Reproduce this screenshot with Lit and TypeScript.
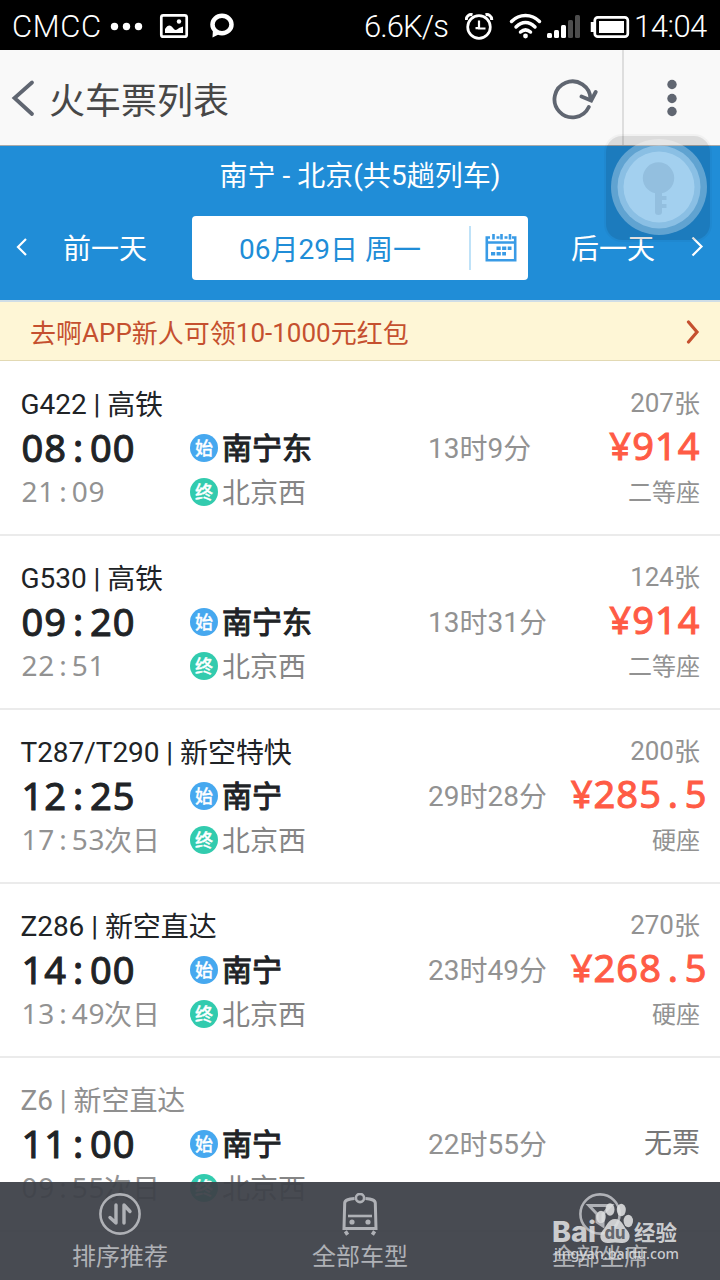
import { LitElement, html, css } from "lit";
import { customElement, property } from "lit/decorators.js";
import { classMap } from "lit/directives/class-map.js";

interface Train {
  code: string;
  kind: string;
  depart: string;
  arrive: string;
  nextDay?: boolean;
  from: string;
  to: string;
  duration: string;
  left?: string;
  price?: string;
  seat?: string;
}

const TRAINS: Train[] = [
  { code: "G422", kind: "高铁", depart: "08:00", arrive: "21:09", from: "南宁东", to: "北京西", duration: "13时9分", left: "207张", price: "¥914", seat: "二等座" },
  { code: "G530", kind: "高铁", depart: "09:20", arrive: "22:51", from: "南宁东", to: "北京西", duration: "13时31分", left: "124张", price: "¥914", seat: "二等座" },
  { code: "T287/T290", kind: "新空特快", depart: "12:25", arrive: "17:53", nextDay: true, from: "南宁", to: "北京西", duration: "29时28分", left: "200张", price: "¥285.5", seat: "硬座" },
  { code: "Z286", kind: "新空直达", depart: "14:00", arrive: "13:49", nextDay: true, from: "南宁", to: "北京西", duration: "23时49分", left: "270张", price: "¥268.5", seat: "硬座" },
  { code: "Z6", kind: "新空直达", depart: "11:00", arrive: "09:55", nextDay: true, from: "南宁", to: "北京西", duration: "22时55分" },
];

/** Splits a mixed string so that the Han runs can sit slightly lower than the Latin ones. */
const mixed = (s = "") =>
  s.split(/([\u4e00-\u9fff]+)/).map((p) => (/[\u4e00-\u9fff]/.test(p) ? html`<span class="han">${p}</span>` : p));

const han = css`
  .han { vertical-align: -1px; line-height: 1; }
`;

/** Digits and punctuation set on an even 0.6em pitch. */
@customElement("mono-text")
export class MonoText extends LitElement {
  @property() value = "";
  static styles = css`
    :host { display: inline-flex; font-family: "Noto Sans", "Noto Sans CJK SC", sans-serif; }
    .c { width: 0.6em; text-align: center; flex: none; }
  `;
  render() {
    return html`${[...this.value].map((c) => html`<span class="c">${c}</span>`)}`;
  }
}

@customElement("train-row")
export class TrainRow extends LitElement {
  @property({ attribute: false }) train!: Train;
  static styles = [han, css`
    :host { display: block; box-sizing: border-box; height: 174px; padding: 20px 20px 0 21px; border-bottom: 2px solid #ebebeb; color: #202326; background: #fff; }
    .row { display: grid; grid-template-columns: 169px 238px 1fr; grid-template-rows: repeat(3, 44px); white-space: nowrap; line-height: 44px; }
    .name { grid-column: 1 / 3; line-height: 46px; margin-left: -0.5px; letter-spacing: -0.05px; }
    .off { color: #8f8f8f; }
    .depart { font-size: 38px; font-weight: 400; line-height: 42px; -webkit-text-stroke: 1px currentColor; }
    .arrive { color: #929292; display: flex; line-height: 43px; }
    .arrive .day { line-height: 48px; margin-left: -1px; }
    .station { display: flex; align-items: center; gap: 4px; height: 44px; }
    .from { font-size: 30px; font-weight: 400; line-height: 42px; padding-top: 2px; -webkit-text-stroke: 1.1px currentColor; }
    .to { color: #858585; }
    .dest { line-height: 40px; padding-top: 4px; }
    .badge { width: 28px; height: 28px; border-radius: 50%; background: #46a8ef; color: #fff; font-size: 18px; font-weight: 500; line-height: 29px; text-align: center; -webkit-text-stroke: 0.3px currentColor; }
    .badge.end { background: #32cbae; }
    .left { grid-column: 3; text-align: right; font-size: 26px; color: #929292; line-height: 42px; }
    .meta { display: flex; justify-content: space-between; }
    .duration { color: #929292; line-height: 45px; }
    .price { font-size: 38px; font-weight: 400; color: #ff5b45; line-height: 39px; -webkit-text-stroke: 1px currentColor; }
    .price.long { margin-right: -7px; }
    .seat { grid-column: 3; text-align: right; font-size: 24px; color: #929292; line-height: 46px; }
    .none { color: #777; line-height: 44px; }
  `];
  render() {
    const t = this.train;
    return html`<div class="row">
      <div class=${classMap({ name: true, off: !t.price })}>${mixed(`${t.code} | ${t.kind}`)}</div>
      <div class="left">${mixed(t.left)}</div>
      <div class="depart"><mono-text .value=${t.depart}></mono-text></div>
      <div class="station"><span class="badge">始</span><span class="from">${t.from}</span></div>
      <div class="meta">
        <span class="duration">${mixed(t.duration)}</span>
        ${t.price
          ? html`<mono-text class=${classMap({ price: true, long: t.price.length > 4 })} .value=${t.price}></mono-text>`
          : html`<span class="none">无票</span>`}
      </div>
      <div class="arrive"><mono-text .value=${t.arrive}></mono-text>${t.nextDay ? html`<span class="day">次日</span>` : ""}</div>
      <div class="station to"><span class="badge end">终</span><span class="dest">${t.to}</span></div>
      <div class="seat">${t.seat}</div>
    </div>`;
  }
}

const chevron = (d: string, w: number, h: number, sw: number, cap = "butt") => html`<svg width=${w} height=${h} viewBox="0 0 ${w} ${h}" fill="none" stroke="currentColor" stroke-width=${sw} stroke-linecap=${cap} stroke-linejoin="miter"><path d=${d} /></svg>`;

@customElement("app-root")
export class AppRoot extends LitElement {
  static styles = [han, css`
    :host { display: block; position: relative; width: 720px; height: 1280px; overflow: hidden; background: #fff; font-family: Roboto, "Noto Sans CJK SC", sans-serif; font-size: 28px; white-space: nowrap; }
    svg { display: block; flex: none; }
    .status { height: 50px; box-sizing: border-box; background: #000; color: #fff; display: flex; align-items: center; padding: 3px 12px 0 12px; font-size: 31px; font-weight: 300; line-height: 47px; }
    .carrier { width: 98px; letter-spacing: 0.6px; }
    .speed { width: 101px; margin-left: 128px; letter-spacing: -0.9px; }
    .clock { letter-spacing: -0.5px; margin-left: 3px; }
    .bar { height: 96px; box-sizing: border-box; background: #f9f9f9; border-bottom: 1px solid #aaa; display: flex; align-items: center; color: #606671; padding-left: 11px; }
    .bar h1 { margin: 0 0 0 13px; flex: 1; font-size: 36px; font-weight: 400; line-height: 60px; padding-top: 8px; color: #474747; }
    .more { display: flex; width: 98px; height: 95px; margin-left: 24px; box-sizing: border-box; border-left: 2px solid #dedede; align-items: center; justify-content: center; }
    .nav { height: 154px; background: #208dd7; color: #fff; border-bottom: 2px solid #cfdde6; }
    .route { text-align: center; line-height: 60px; height: 70px; }
    .days { display: flex; align-items: center; height: 64px; line-height: 64px; padding: 0 15px 0 16px; }
    .prev, .next { line-height: 60px; padding-top: 4px; }
    .prev { margin-left: 35px; width: 129px; }
    .next { margin-left: 43px; flex: 1; }
    .date { width: 336px; height: 64px; box-sizing: border-box; display: flex; align-items: center; background: #fff; border-radius: 4px; color: #208dd7; padding-left: 47px; }
    .date .day { width: 230px; line-height: 60px; padding-top: 3px; }
    .cal { height: 44px; border-left: 2px solid #bfe2f8; padding-left: 14px; display: flex; align-items: center; }
    .promo { height: 58px; border-bottom: 1px solid #e2d9b3; margin-bottom: 1px; background: #fef6d6; color: #c5502f; font-size: 26px; line-height: 58px; display: flex; align-items: center; justify-content: space-between; padding: 0 20px 0 30px; }
    .promo .msg { padding-top: 3px; }
    .promo svg { margin-top: 2px; }
    .tabs { position: absolute; left: 0; right: 0; bottom: 0; height: 98px; background: rgba(62, 65, 73, 0.95); color: #afb1b6; display: grid; grid-template-columns: repeat(3, 1fr); font-size: 24px; }
    .tab { display: flex; flex-direction: column; align-items: center; padding-top: 11px; line-height: 43px; }
    .assist { position: absolute; left: 600px; top: 129px; }
    .mark { position: absolute; left: 550px; top: 1198px; }
    .latin { font-family: "Noto Sans", sans-serif; }
    .brand { font-family: Inter, "Noto Sans CJK SC", sans-serif; }
  `];

  render() {
    return html`
      <div class="status">
        <span class="carrier">CMCC</span>
        <svg width="126" height="30" viewBox="0 0 126 30" fill="#fff">
          <circle cx="4.500" cy="14.500" r="3.700" /><circle cx="16.500" cy="14.500" r="3.700" /><circle cx="28.500" cy="14.500" r="3.700" />
          <rect x="51.300" y="3.300" width="25.400" height="21.400" rx="2" fill="none" stroke="#fff" stroke-width="2.700" />
          <path d="M55 21v-4c3-5 6-4 8-1 2 3 4 2 6 0l4-1.500v6.500z" /><circle cx="69" cy="9.500" r="2.200" />
          <ellipse cx="112" cy="12.500" rx="9.500" ry="8.700" fill="none" stroke="#fff" stroke-width="4.500" /><path d="M103 17l-.500 8.500 8-4z" />
        </svg>
        <span class="speed">6.6K/s</span>
        <svg width="166" height="34" viewBox="0 0 166 34" fill="none" stroke="#fff">
          <circle cx="14" cy="17" r="11.300" stroke-width="2.700" />
          <path d="M14 10.500v8H20.500M10.500 18.200h4" stroke-width="2.200" />
          <path d="M1.300 10C1 6 4.500 4 7.500 4.800M26.700 10C27 6 23.500 4 20.500 4.800" stroke-width="3" />
          <g stroke-width="3.500" stroke-linecap="round"><path d="M46.500 11.500c8-8 20-8 28 0M51 17c6-6 13-6 19 0M55.500 22c3.500-3 6.500-3 10 0" /></g>
          <circle cx="60.500" cy="26" r="2.400" fill="#fff" stroke="none" />
          <g fill="#fff" stroke="none"><rect x="82" y="23" width="5" height="5" rx="1.500" /><rect x="89" y="20" width="5" height="8" rx="1.500" /><rect x="96" y="15" width="5" height="13" rx="1.500" /></g>
          <g fill="#4d4d4d" stroke="none"><rect x="103" y="10" width="5" height="18" rx="1.500" /><rect x="110" y="5" width="5" height="23" rx="1.500" /></g>
          <rect x="129.800" y="7.300" width="33" height="19.400" rx="3" stroke-width="2.700" /><path d="M127.500 12v10" stroke-width="3.500" />
          <rect x="134" y="11" width="25" height="12" fill="#fff" stroke="none" />
        </svg>
        <span class="clock">14:04</span>
      </div>

      <div class="bar">
        ${chevron("M21 3.500L3.500 19l17.500 16", 25, 38, 3.800, "round")}
        <h1>火车票列表</h1>
        <svg width="48" height="44" viewBox="0 0 48 44" fill="none" stroke="currentColor" stroke-width="3.800" stroke-linecap="round">
          <path d="M38.800 31A18 18 0 1 1 40.500 23" /><path d="M31.500 20.500l9.700 4 4.500-8.500" />
        </svg>
        <div class="more">
          <svg width="10" height="38" viewBox="0 0 10 38" fill="currentColor"><circle cx="5" cy="5.500" r="4.700" /><circle cx="5" cy="19.500" r="4.700" /><circle cx="5" cy="32.500" r="4.700" /></svg>
        </div>
      </div>

      <div class="nav">
        <div class="route">${mixed("南宁 - 北京(共5趟列车)")}</div>
        <div class="days">
          ${chevron("M10 1L2 9l8 8", 12, 20, 2.2)}
          <span class="prev">前一天</span>
          <div class="date">
            <span class="day">${mixed("06月29日 周一")}</span>
            <div class="cal">
              <svg width="32" height="28" viewBox="0 0 32 28" fill="none" stroke="#399be6" stroke-width="2.600">
                <path d="M5 3.500H1.800v22.700h28.400V3.500H27M11.500 3.500h3M19.500 3.500h3M2 8.500h28" />
                <path d="M8.500 0v5.500M16.500 0v5.500M25 0v5.500" />
                <path d="M11.500 14.300h15M6 19.800h15" stroke-width="3.400" stroke-dasharray="4.200 1.400" />
              </svg>
            </div>
          </div>
          <span class="next">后一天</span>
          ${chevron("M1.500 0.500l9 9-9 9", 14, 22, 2.2)}
        </div>
      </div>

      <div class="promo"><span class="msg">${mixed("去啊APP新人可领10-1000元红包")}</span>${chevron("M2.500 2l8.500 10-8.500 10", 14, 24, 3.2, "round")}</div>

      ${TRAINS.map((t) => html`<train-row .train=${t}></train-row>`)}

      <div class="tabs">
        <div class="tab">
          <svg width="42" height="43" viewBox="0 0 42 43" fill="none" stroke="currentColor" stroke-width="2.600">
            <circle cx="21" cy="21" r="19.600" />
            <g stroke-width="3.400" stroke-linecap="round" stroke-linejoin="round"><path d="M17 12v18l-6-5.500M25 30V12l6 6.500" /></g>
          </svg>
          <span>排序推荐</span>
        </div>
        <div class="tab">
          <svg width="42" height="43" viewBox="0 0 42 43" fill="none" stroke="currentColor" stroke-width="3">
            <path d="M15.500 5.500C10 6 6 6.500 5.700 10L5 35.500h32L36.300 10C36 6.500 32 6 26.500 5.500" /><circle cx="21" cy="5" r="4.100" stroke-width="2.600" />
            <path d="M9 23h24" stroke-width="2.600" /><circle cx="13" cy="29" r="2.600" fill="currentColor" stroke="none" /><circle cx="29" cy="29" r="2.600" fill="currentColor" stroke="none" />
            <path d="M9 39l-3 2M33 39l3 2" stroke-width="4" />
          </svg>
          <span>全部车型</span>
        </div>
        <div class="tab">
          <svg width="42" height="43" viewBox="0 0 42 43" fill="none" stroke="currentColor" stroke-width="2.600">
            <circle cx="21" cy="21" r="19.600" /><path d="M10 12.500h22L24 21v12l-6-4v-8z" stroke-width="3" />
          </svg>
          <span>全部坐席</span>
        </div>
      </div>

      <svg class="mark" width="134" height="66" viewBox="0 0 134 66" fill="#dedfe0" fill-opacity="0.88">
        <text class="brand" x="2" y="44" font-size="28" font-weight="800" textLength="44" lengthAdjust="spacingAndGlyphs">Bai</text>
        <ellipse cx="51" cy="19" rx="4.700" ry="6.200" /><ellipse cx="60" cy="11.500" rx="4.500" ry="6.200" /><ellipse cx="71.300" cy="12" rx="4.500" ry="6.200" /><ellipse cx="78.300" cy="23" rx="4.700" ry="6.200" />
        <path d="M65 21c7 0 8 7 12 11 6 7 1 14-6 13-4-.800-8-.800-12 0-7 1-12-6-6-13 4-4 5-11 12-11z" />
        <text class="brand" x="54.500" y="41" font-size="18" font-weight="800" fill="#55585f" textLength="21" lengthAdjust="spacingAndGlyphs">du</text>
        <text class="brand" x="84" y="42" font-size="21" font-weight="700" textLength="43" lengthAdjust="spacingAndGlyphs">经验</text>
        <text class="latin" x="4" y="61" font-size="14" font-weight="500" textLength="125" lengthAdjust="spacingAndGlyphs">jingyan.baidu.com</text>
      </svg>

      <svg class="assist" width="118" height="118" viewBox="0 0 118 118">
        <rect x="4" y="5" width="108" height="108" rx="18" fill="#000" fill-opacity="0.03" />
        <rect x="6" y="7" width="104" height="104" rx="16" fill="#000" fill-opacity="0.09" />
        <circle cx="59" cy="58" r="48" fill="#fff" fill-opacity="0.3" />
        <circle cx="59" cy="58" r="41.500" fill="#b4dcf7" fill-opacity="0.5" />
        <circle cx="59" cy="58" r="35.500" fill="#b4dcf7" fill-opacity="0.6" />
        <g fill="#93bfdf"><circle cx="58.500" cy="49" r="15.700" /><path d="M55 62h7v5h4.500v4H62v4h4.500v4H62v4a3.500 3 0 0 1-7 0z" /></g>
      </svg>
    `;
  }
}
